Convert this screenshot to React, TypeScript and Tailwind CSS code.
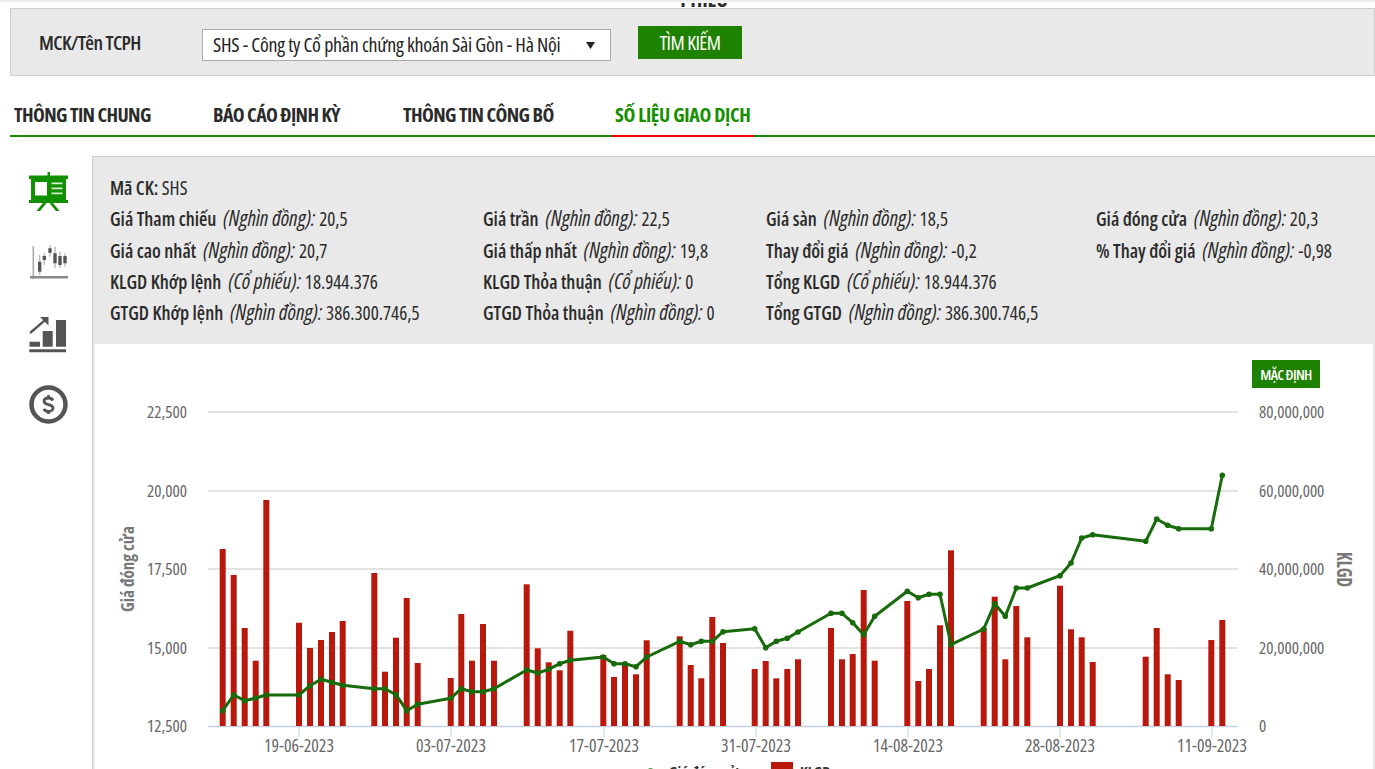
import React from "react";

const BARS: [number, number][] = [
  [222.7, 549], [233.7, 575], [244.7, 628], [255.7, 660.7], [266.3, 500], [299, 622.7], [310, 648], [321, 640],
  [332, 632], [342.7, 621], [374.3, 573], [385, 671.7], [396, 637.7], [406.7, 598], [417.7, 663], [450.7, 678],
  [461.3, 614], [472, 660.7], [483, 624], [494, 660.7], [526.7, 584.3], [537.7, 648.3], [548.7, 662.3],
  [559.7, 670.3], [570.3, 630.7], [603.3, 655], [614, 677], [625, 663], [636, 674.3], [646.7, 640.3],
  [679.7, 636.3], [690.7, 665], [701.3, 678.3], [712.3, 617], [723, 643], [754.7, 669], [765.7, 661],
  [776.3, 678.3], [787.3, 669], [798, 659.3], [831, 628], [842, 659.3], [852.7, 654], [863.7, 590],
  [874.7, 660.7], [907.3, 601], [918.3, 681], [929, 669], [940, 625.3], [951, 550.3], [983.7, 628],
  [994.7, 596.7], [1005.3, 659.3], [1016.3, 606], [1027.3, 637.3], [1060, 585.7], [1071, 629.3],
  [1081.7, 637.3], [1092.7, 662], [1145.7, 656.7], [1156.7, 628], [1167.7, 674.3], [1178.7, 680],
  [1211.3, 640], [1222.3, 620],
];

const LINE_Y = [
  710.7, 695, 700.7, 698, 695, 695, 685.7, 679.3, 682.3, 685.3, 688.7, 688.7, 694.7, 710.7, 704.3, 698.3, 688.7,
  691.7, 691.7, 688.7, 670, 673, 669.3, 663.7, 660.3, 657, 663.7, 663.7, 666.7, 657, 641.3, 644.7, 641.3, 641.3,
  631.7, 628.7, 647.7, 641.3, 638.3, 632, 613.3, 613.3, 622.7, 634.7, 616.3, 591.3, 597.7, 594.3, 594.3, 644.7,
  629, 603.7, 616.3, 588, 588, 575.7, 563, 538, 534.7, 541.3, 519, 525.3, 528.7, 528.7, 475.3,
];

const GRID = [412, 491, 569, 648, 726];
const LEFT_LABELS = ["22,500", "20,000", "17,500", "15,000", "12,500"];
const RIGHT_LABELS = ["80,000,000", "60,000,000", "40,000,000", "20,000,000", "0"];
const DATES: [number, string][] = [
  [299, "19-06-2023"], [451, "03-07-2023"], [604, "17-07-2023"], [756, "31-07-2023"],
  [908, "14-08-2023"], [1060, "28-08-2023"], [1212, "11-09-2023"],
];

const INFO: [string, string, string][] = [
  ["Giá Tham chiếu", "(Nghìn đồng):", "20,5"],
  ["Giá trần", "(Nghìn đồng):", "22,5"],
  ["Giá sàn", "(Nghìn đồng):", "18,5"],
  ["Giá đóng cửa", "(Nghìn đồng):", "20,3"],
  ["Giá cao nhất", "(Nghìn đồng):", "20,7"],
  ["Giá thấp nhất", "(Nghìn đồng):", "19,8"],
  ["Thay đổi giá", "(Nghìn đồng):", "-0,2"],
  ["% Thay đổi giá", "(Nghìn đồng):", "-0,98"],
  ["KLGD Khớp lệnh", "(Cổ phiếu):", "18.944.376"],
  ["KLGD Thỏa thuận", "(Cổ phiếu):", "0"],
  ["Tổng KLGD", "(Cổ phiếu):", "18.944.376"],
  ["", "", ""],
  ["GTGD Khớp lệnh", "(Nghìn đồng):", "386.300.746,5"],
  ["GTGD Thỏa thuận", "(Nghìn đồng):", "0"],
  ["Tổng GTGD", "(Nghìn đồng):", "386.300.746,5"],
  ["", "", ""],
];

const TABS = ["THÔNG TIN CHUNG", "BÁO CÁO ĐỊNH KỲ", "THÔNG TIN CÔNG BỐ", "SỐ LIỆU GIAO DỊCH"];
const TAB_WIDTHS = ["w-[199px]", "w-[190px]", "w-[212px]", "w-[143px]"];

const BoardIcon = () => (
  <svg width="40" height="40" viewBox="0 0 40 40" className="blur-[0.3px]">
    <path d="M18.500 0h2.500v3.500h-2.500zM0 3.500h39v3.500h-2v21h2v3H0v-3h2V7H0z" fill="#119000" />
    <path d="M6 10h12v13.500H6z" fill="#fff" />
    <path d="M22.500 10.500h11v1.800h-11zM22.500 15.500h11v1.800h-11zM22.500 20.500h11v1.800h-11z" fill="#d8edd2" />
    <path d="M14 31l-6.500 8h3.500l6.500-8zM24 31l6.500 8H27l-6.500-8z" fill="#119000" />
  </svg>
);

const CandleIcon = () => (
  <svg width="40" height="38" viewBox="0 0 40 38" className="blur-[0.4px]">
    <path d="M3.500 1h1.600v33H3.500z" fill="#aaa" />
    <path d="M1 31h38v2.400H1z" fill="#888" />
    <path d="M10 10h1.400v20H10zM14.600 7.700H16V20h-1.400zM20.300 0h1.400v11.700h-1.400zM25.300 1.700h1.400v21.600h-1.400zM30.300 6.700h1.400v16.600h-1.400zM35.300 8.300h1.400v13.400h-1.400z" fill="#bbb" />
    <path d="M9 16.700h3.400v10H9zM13.600 11H17v4h-3.400zM19.300 3.300h3.400v4.400h-3.400zM24.300 8.300h3.400v10h-3.400zM29.300 11h3.400v9h-3.400zM34.300 11h3.400v7.300h-3.400z" fill="#555" />
  </svg>
);

const GrowthIcon = () => (
  <svg width="38" height="37" viewBox="0 0 38 37" fill="#555" className="blur-[0.3px]">
    <path d="M0.500 25.700H11v5H0.500zM13.700 15h10v15.700h-10zM27 4h10v26.700H27zM0.300 33.300H37v3H0.300z" />
    <path d="M0.300 16L15 3.500l1.500 1.800L1.800 18z" />
    <path d="M11 1h8.500v8.500z" />
  </svg>
);

const DollarIcon = () => (
  <svg width="40" height="40" viewBox="0 0 40 40" className="blur-[0.2px]">
    <circle cx="19.500" cy="19.500" r="17" fill="none" stroke="#555" strokeWidth="4.500" />
    <path d="M24 15.500c-.8-1.600-2.400-2.500-4.500-2.500-2.700 0-4.500 1.400-4.500 3.300s1.800 2.700 4.500 3.300 4.500 1.500 4.500 3.400-1.800 3.400-4.500 3.400c-2.200 0-3.900-.9-4.700-2.600" fill="none" stroke="#555" strokeWidth="2.800" />
    <path d="M18.200 10h2.600v4h-2.600zM18.200 25h2.600v4h-2.600z" fill="#555" />
  </svg>
);

function PriceChart() {
  const line = BARS.map(([x], i) => `${x},${LINE_Y[i]}`).join(" ");
  return (
    <svg width="1278" height="425" viewBox="95 344 1278 425" className="block">
      {GRID.slice(0, 4).map((y) => (
        <line key={y} x1="208" x2="1238" y1={y} y2={y} stroke="#dadada" strokeWidth="1.500" />
      ))}
      <line x1="208" x2="1238" y1="726.500" y2="726.500" stroke="#c4d0e2" strokeWidth="1.500" />
      {DATES.map(([x]) => (
        <line key={x} x1={x} x2={x} y1="727" y2="737" stroke="#c4d0e2" />
      ))}
      {BARS.map(([x, top]) => (
        <rect key={x} x={x - 3} y={top} width="6" height={726 - top} fill="#b9190d" />
      ))}
      <polyline points={line} fill="none" stroke="#176b0a" strokeWidth="3" strokeLinejoin="round" />
      {BARS.map(([x], i) => (
        <circle key={x} cx={x} cy={LINE_Y[i]} r="2.800" fill="#176b0a" />
      ))}
      <g fill="#666" fontSize="17">
        {GRID.map((y, i) => (
          <text key={y} x="187" y={y + 6} textAnchor="end">{LEFT_LABELS[i]}</text>
        ))}
        {GRID.map((y, i) => (
          <text key={y} x="1259" y={y + 6}>{RIGHT_LABELS[i]}</text>
        ))}
        {DATES.map(([x, d]) => (
          <text key={x} x={x} y="752" textAnchor="middle" fontSize="17.700">{d}</text>
        ))}
      </g>
      <text transform="translate(134 569) rotate(-90)" textAnchor="middle" fill="#777" fontSize="17" fontWeight="700">Giá đóng cửa</text>
      <text transform="translate(1337 552) rotate(90)" fill="#777" fontSize="21" fontWeight="700" textLength="35" lengthAdjust="spacingAndGlyphs">KLGD</text>
      <g fontSize="15" fontWeight="700" fill="#333">
        <circle cx="650.500" cy="771" r="3" fill="#4f9a45" />
        <text x="669" y="777">Giá đóng cửa</text>
        <rect x="771" y="762" width="22" height="14" fill="#b9190d" />
        <text x="800" y="777">KLGD</text>
      </g>
    </svg>
  );
}

export default function App() {
  return (
    <div className="relative h-[769px] w-[1375px] overflow-hidden bg-white [font-family:'Open_Sans',sans-serif] [font-stretch:75%] text-[#2b2b2b]">
      <div className="absolute inset-x-0 top-0 h-[3px] bg-gradient-to-b from-[#e6e6e6] to-white" />
      <div className="flex h-[8px] items-end justify-center overflow-hidden pl-[33px]">
        <span className="-mb-[2px] text-[21px] leading-none font-bold tracking-[-0.3px]">PHIẾU</span>
      </div>

      <div className="ml-[10px] flex h-[68px] items-center border border-[#cfcfcf] bg-[#e9e9e9]">
        <span className="mt-[2px] ml-[28px] w-[163px] text-[20px] font-semibold tracking-[-0.6px]">MCK/Tên TCPH</span>
        <div className="mt-[6px] flex h-[32px] w-[409px] items-center justify-between border border-[#aaa] bg-white pr-[15px] pl-[10px] text-[20px] tracking-[-0.25px] text-[#222]">
          <span>SHS - Công ty Cổ phần chứng khoán Sài Gòn - Hà Nội</span>
          <svg width="9" height="7" viewBox="0 0 9 7"><path d="M0 0h9L4.500 7z" fill="#222" /></svg>
        </div>
        <button className="mt-[1px] ml-[27px] h-[33px] w-[104px] bg-[#1e8200] text-[20px] font-medium tracking-[-0.6px] text-white">TÌM KIẾM</button>
      </div>

      <div className="ml-[10px] flex h-[61px] items-end border-b-2 border-[#149000]">
        {TABS.map((t, i) => (
          <div key={t} className={`${TAB_WIDTHS[i]} ${i === 3 ? "relative tracking-[-0.35px] text-[#149000]" : "tracking-[-0.6px]"} h-[34px] pl-[4px] text-[20px] leading-[28px] font-bold whitespace-nowrap`}>
            {t}
            {i === 3 && <div className="absolute inset-x-0 -bottom-[2px] h-[2px] bg-[#ee0000]" />}
          </div>
        ))}
      </div>

      <div className="mt-[19px] flex">
        <div className="flex w-[92px] flex-col items-start gap-[33px] pt-[16px] pl-[29px]">
          <BoardIcon />
          <CandleIcon />
          <div className="h-[36px]"><GrowthIcon /></div>
          <DollarIcon />
        </div>
        <div className="min-w-0 flex-1 border-t border-l border-[#cfcfcf] bg-[#e9e9e9]">
          <div className="h-[187px] pt-[16px] pl-[17px] text-[19px] leading-[31.300px]">
            <div><span className="font-semibold">Mã CK:</span> SHS</div>
            <div className="-mt-[1px] grid grid-cols-[373px_283px_330px_1fr]">
              {INFO.map(([label, unit, value], i) => (
                <div key={i} className="h-[31.300px] whitespace-nowrap">
                  <span className="font-semibold">{label}</span>
                  <i className="ml-[7px] text-[21px]">{unit}</i>
                  <span className="ml-[4px] text-[19px]">{value}</span>
                </div>
              ))}
            </div>
          </div>
          <div className="relative mr-[2px] ml-[2px] bg-white">
            <PriceChart />
            <button className="absolute top-[16px] right-[53px] h-[28px] w-[68px] bg-[#1e8200] text-[15px] font-semibold tracking-[-0.7px] text-white">MẶC ĐỊNH</button>
          </div>
        </div>
      </div>
    </div>
  );
}
